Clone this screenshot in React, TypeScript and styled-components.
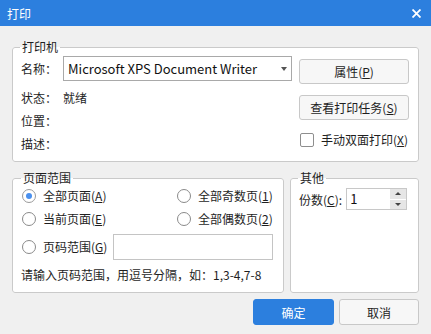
import styled, { createGlobalStyle } from "styled-components";

const Global = createGlobalStyle`
  html, body {
    margin: 0;
    background: #f0f0f0;
  }
  body {
    font-family: "Noto Sans CJK SC", "Noto Sans", sans-serif;
    font-size: 12px;
    color: #1e1e1e;
  }
`;

const Dialog = styled.div`
  width: 431px;
  height: 334px;
  background: #f0f0f0;
  display: flex;
  flex-direction: column;
`;
const TitleBar = styled.div`
  height: 26px;
  background: #2c7fde;
  color: #fff;
  display: flex;
  align-items: center;
  justify-content: space-between;
  padding: 0 10px 0 7px;
  font-size: 12px;
`;
const Body = styled.div`
  padding: 13px 12px 0;
  display: flex;
  flex-direction: column;
`;
const Group = styled.fieldset`
  margin: 0;
  padding: 0 8px 6px;
  border: 1px solid #cacaca;
  border-radius: 3px;
  background: #fff;
  min-width: 0;
`;
const Legend = styled.legend`
  margin-left: -1px;
  padding: 0 2px;
  font-size: 12px;
  line-height: 16px;
  color: #1e1e1e;
`;
const PrinterGroup = styled(Group)`
  padding: 1px 9px 6px 8px;
`;
const PrinterBody = styled.div`
  display: flex;
  gap: 7px;
`;
const InfoCol = styled.div`
  width: 271px;
  display: flex;
  flex-direction: column;
`;
const InfoRow = styled.div<{ $first?: boolean }>`
  display: flex;
  align-items: center;
  height: ${(p) => (p.$first ? 25 : 23)}px;
  margin-bottom: ${(p) => (p.$first ? 5 : 0)}px;
  line-height: 16px;
`;
const InfoLabel = styled.span`
  width: 42px;
  flex: none;
  white-space: nowrap;
`;
const Select = styled.div`
  flex: 1;
  height: 25px;
  box-sizing: border-box;
  border: 1px solid #a9a9a9;
  background: #fff;
  display: flex;
  align-items: center;
  justify-content: space-between;
  padding: 0 4px 0 4px;
  font-size: 13px;
  color: #111;
`;
const Caret = styled.span`
  width: 0;
  height: 0;
  border-left: 3px solid transparent;
  border-right: 3px solid transparent;
  border-top: 4px solid #555;
`;
const ActionCol = styled.div`
  width: 110px;
  display: flex;
  flex-direction: column;
  gap: 11px;
  padding-top: 3px;
`;
const Button = styled.button<{ $w: number; $primary?: boolean; $h?: number }>`
  width: ${(p) => p.$w}px;
  height: ${(p) => p.$h ?? 25}px;
  box-sizing: border-box;
  border: 1px solid ${(p) => (p.$primary ? "#2c7fde" : "#c8c8c8")};
  border-radius: 3px;
  background: ${(p) => (p.$primary ? "#2c7fde" : "#f7f7f7")};
  color: ${(p) => (p.$primary ? "#fff" : "#1e1e1e")};
  font-family: inherit;
  font-size: 12px;
  padding: 0;
  display: flex;
  align-items: center;
  justify-content: center;
`;
const CheckRow = styled.label`
  display: flex;
  align-items: center;
  gap: 7px;
  margin-left: 1px;
  white-space: nowrap;
`;
const Box = styled.span`
  width: 14px;
  height: 14px;
  box-sizing: border-box;
  border: 1px solid #8e8e8e;
  border-radius: 2px;
  background: #fff;
`;
const Lower = styled.div`
  display: flex;
  gap: 6px;
  margin-top: 8px;
`;
const RangeGroup = styled(Group)`
  width: 272px;
  box-sizing: border-box;
  padding: 0 8px 8px 9px;
`;
const OtherGroup = styled(Group)`
  flex: 1;
`;
const RangeGrid = styled.div`
  display: grid;
  grid-template-columns: 155px 1fr;
  grid-template-rows: 18px 18px 26px 20px;
  row-gap: 5px;
  align-items: center;
  padding-top: 1px;
`;
const RadioItem = styled.label`
  display: flex;
  align-items: center;
  gap: 7px;
  white-space: nowrap;
  line-height: 16px;
`;
const Circle = styled.span<{ $on?: boolean }>`
  width: 14px;
  height: 14px;
  box-sizing: border-box;
  border-radius: 50%;
  border: 1px solid ${(p) => (p.$on ? "#9a9a9a" : "#8a8a8a")};
  background: #fff;
  display: flex;
  align-items: center;
  justify-content: center;
  &::after {
    content: "";
    width: 6px;
    height: 6px;
    border-radius: 50%;
    background: ${(p) => (p.$on ? "#4a90ee" : "transparent")};
  }
`;
const CustomRow = styled.div`
  grid-column: 1 / 3;
  display: flex;
  align-items: center;
  margin-top: 1px;
`;
const TextInput = styled.div`
  margin-left: 6px;
  width: 160px;
  height: 26px;
  box-sizing: border-box;
  border: 1px solid #c4c4c4;
  background: #fff;
`;
const Hint = styled.div`
  grid-column: 1 / 3;
  margin-left: -1px;
  margin-top: 1px;
  white-space: nowrap;
  line-height: 16px;
`;
const CopiesRow = styled.div`
  display: flex;
  align-items: center;
  gap: 4px;
  margin-top: 2px;
`;
const Spin = styled.div`
  width: 61px;
  height: 22px;
  box-sizing: border-box;
  border: 1px solid #c8c8c8;
  background: #fff;
  display: flex;
`;
const SpinValue = styled.div`
  flex: 1;
  padding-left: 3px;
  font-size: 13px;
  line-height: 20px;
  color: #111;
`;
const SpinButtons = styled.div`
  width: 16px;
  display: flex;
  flex-direction: column;
  gap: 1px;
  background: #fff;
`;
const SpinArrow = styled.div<{ $down?: boolean }>`
  flex: 1;
  background: #e6e6e6;
  display: flex;
  align-items: center;
  justify-content: center;
  &::after {
    content: "";
    border-left: 3px solid transparent;
    border-right: 3px solid transparent;
    ${(p) => (p.$down ? "border-top: 3px solid #444;" : "border-bottom: 3px solid #444;")}
  }
`;
const Footer = styled.div`
  display: flex;
  justify-content: flex-end;
  gap: 5px;
  margin-top: 6px;
`;

const Key = ({ k }: { k: string }) => (
  <>
    (<u>{k}</u>)
  </>
);

export default function App() {
  return (
    <Dialog>
      <Global />
      <TitleBar>
        <span>打印</span>
        <svg width="9" height="9" viewBox="0 0 9 9">
          <path d="M0.5 0.5 L8.5 8.5 M8.5 0.5 L0.5 8.5" stroke="#fff" strokeWidth="1.8" />
        </svg>
      </TitleBar>
      <Body>
        <PrinterGroup>
          <Legend>打印机</Legend>
          <PrinterBody>
            <InfoCol>
              <InfoRow $first>
                <InfoLabel>名称：</InfoLabel>
                <Select>
                  <span>Microsoft XPS Document Writer</span>
                  <Caret />
                </Select>
              </InfoRow>
              <InfoRow>
                <InfoLabel>状态：</InfoLabel>
                <span>就绪</span>
              </InfoRow>
              <InfoRow>
                <InfoLabel>位置：</InfoLabel>
              </InfoRow>
              <InfoRow>
                <InfoLabel>描述：</InfoLabel>
              </InfoRow>
            </InfoCol>
            <ActionCol>
              <Button $w={110}>
                属性<Key k="P" />
              </Button>
              <Button $w={110}>
                查看打印任务<Key k="S" />
              </Button>
              <CheckRow>
                <Box />
                <span>
                  手动双面打印<Key k="X" />
                </span>
              </CheckRow>
            </ActionCol>
          </PrinterBody>
        </PrinterGroup>
        <Lower>
          <RangeGroup>
            <Legend>页面范围</Legend>
            <RangeGrid>
              <RadioItem>
                <Circle $on />
                <span>
                  全部页面<Key k="A" />
                </span>
              </RadioItem>
              <RadioItem>
                <Circle />
                <span>
                  全部奇数页<Key k="1" />
                </span>
              </RadioItem>
              <RadioItem>
                <Circle />
                <span>
                  当前页面<Key k="E" />
                </span>
              </RadioItem>
              <RadioItem>
                <Circle />
                <span>
                  全部偶数页<Key k="2" />
                </span>
              </RadioItem>
              <CustomRow>
                <RadioItem>
                  <Circle />
                  <span>
                    页码范围<Key k="G" />
                  </span>
                </RadioItem>
                <TextInput />
              </CustomRow>
              <Hint>请输入页码范围，用逗号分隔，如：1,3-4,7-8</Hint>
            </RangeGrid>
          </RangeGroup>
          <OtherGroup>
            <Legend>其他</Legend>
            <CopiesRow>
              <span>
                份数<Key k="C" />:
              </span>
              <Spin>
                <SpinValue>1</SpinValue>
                <SpinButtons>
                  <SpinArrow />
                  <SpinArrow $down />
                </SpinButtons>
              </Spin>
            </CopiesRow>
          </OtherGroup>
        </Lower>
        <Footer>
          <Button $w={81} $h={26} $primary>
            确定
          </Button>
          <Button $w={80} $h={26}>
            取消
          </Button>
        </Footer>
      </Body>
    </Dialog>
  );
}
